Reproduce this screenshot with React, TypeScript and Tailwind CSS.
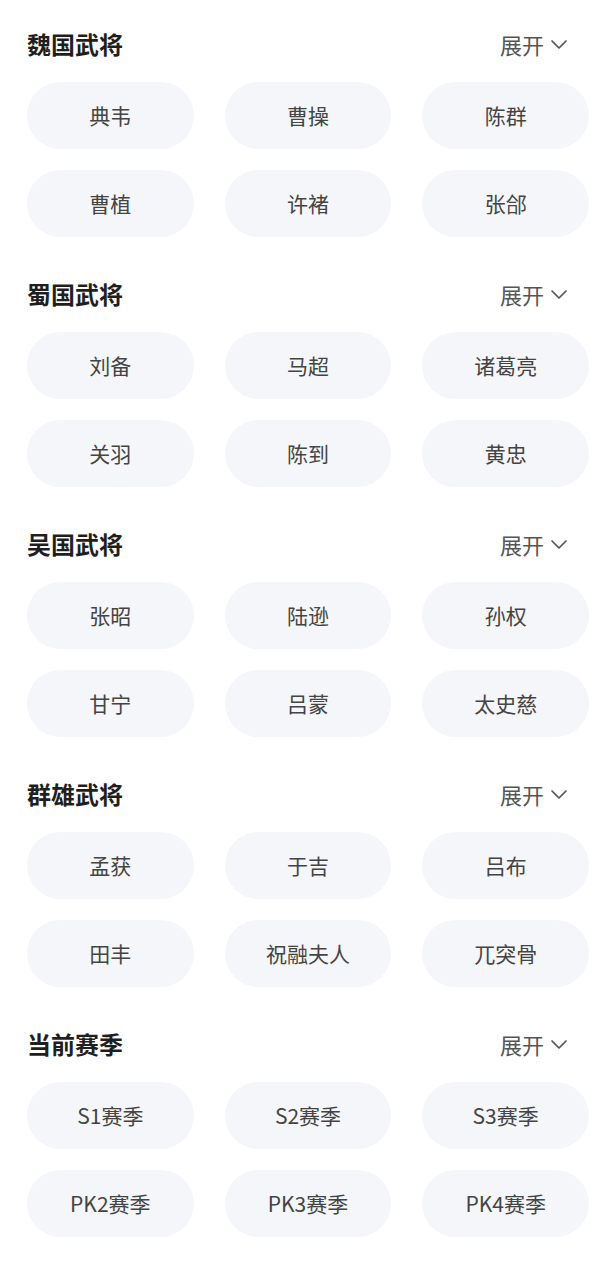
const sections: { title: string; items: string[] }[] = [
  { title: '魏国武将', items: ['典韦', '曹操', '陈群', '曹植', '许褚', '张郃'] },
  { title: '蜀国武将', items: ['刘备', '马超', '诸葛亮', '关羽', '陈到', '黄忠'] },
  { title: '吴国武将', items: ['张昭', '陆逊', '孙权', '甘宁', '吕蒙', '太史慈'] },
  { title: '群雄武将', items: ['孟获', '于吉', '吕布', '田丰', '祝融夫人', '兀突骨'] },
  { title: '当前赛季', items: ['S1赛季', 'S2赛季', 'S3赛季', 'PK2赛季', 'PK3赛季', 'PK4赛季'] },
];

function Chevron() {
  return (
    <svg width="18" height="18" viewBox="0 0 18 18" fill="none" className="ml-[6px]">
      <path d="M2 6l7 7 7-7" stroke="#555" strokeWidth="1.7" strokeLinecap="round" strokeLinejoin="round" />
    </svg>
  );
}

export default function App() {
  return (
    <div
      className="w-[600px] min-h-[1265px] bg-white pl-[27px] pr-[11px] pt-[24px]"
      style={{ fontFamily: '"Noto Sans CJK SC", "Noto Sans", sans-serif' }}
    >
      {sections.map((s) => (
        <section key={s.title} className="mb-[37px]">
          <div className="flex items-center justify-between h-[40px] pr-[21px]">
            <h2 className="text-[24px] font-bold text-[#1f1f1f]">{s.title}</h2>
            <button className="flex items-center text-[22px] text-[#555]">
              展开
              <Chevron />
            </button>
          </div>
          <div className="grid grid-cols-3 gap-x-[31px] gap-y-[21px] mt-[18px]">
            {s.items.map((it) => (
              <div
                key={it}
                className="h-[67px] rounded-full bg-[#f5f6f9] flex items-center justify-center text-[21px] text-[#444]"
              >
                {it}
              </div>
            ))}
          </div>
        </section>
      ))}
    </div>
  );
}
